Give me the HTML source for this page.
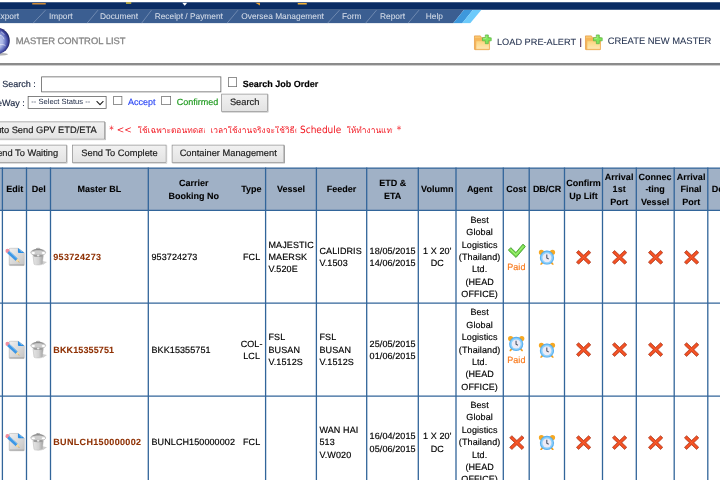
<!DOCTYPE html>
<html lang="en"><head><meta charset="utf-8"><title>Master Control List</title>
<style>
html,body{margin:0;padding:0;background:#fff;overflow:hidden;}
body{width:720px;height:480px;position:relative;font-family:"Liberation Sans",sans-serif;}
#w{position:absolute;left:0;top:0;width:960px;height:640px;transform:scale(.75);transform-origin:0 0;overflow:hidden;background:#fff;font-size:12px;color:#000;-webkit-text-stroke:.22px;text-rendering:geometricPrecision;}
.a{position:absolute;white-space:nowrap;line-height:1;}
.btn{position:absolute;box-sizing:border-box;border:1.2px solid #8f8f8f;background:linear-gradient(#f1f1f1,#e3e3e3);color:#1a1a1a;font-size:12.4px;text-align:center;white-space:nowrap;box-shadow:.8px .8px 0 #9a9a9a;}
.cb{position:absolute;box-sizing:border-box;border:1.3px solid #6e6e6e;background:#fff;}
table{position:absolute;border-collapse:collapse;table-layout:fixed;font-size:12px;}
td,th{border:2px solid transparent;padding:0;overflow:hidden;box-sizing:border-box;line-height:16.6px;}
th{font-weight:bold;text-align:center;-webkit-text-stroke:.12px;}
td{letter-spacing:.13px;}
.ct{display:flex;align-items:center;}
.ct span{display:block;text-align:center;}
.l{text-align:left;padding-left:3px;}
.c{text-align:center;}
.r{text-align:right;padding-right:3px;}
.m{color:#8f3104;font-weight:bold;-webkit-text-stroke:.1px;}
.paid{color:#f97a1c;display:block;line-height:8.87px;padding-top:7.8px;}
svg{display:block;margin:0 auto;}
.th{display:inline-block;overflow:hidden;white-space:nowrap;vertical-align:bottom;}
</style></head>
<body><div id="w">
<svg width="0" height="0" style="position:absolute"><defs><linearGradient id="gd" x1="0" y1="0" x2="1" y2="1"><stop offset="0" stop-color="#f0f0f0"/><stop offset="1" stop-color="#c4c4c4"/></linearGradient><linearGradient id="gb" x1="0" y1="0" x2="1" y2="0"><stop offset="0" stop-color="#e4e4e4"/><stop offset=".55" stop-color="#d2d2d2"/><stop offset="1" stop-color="#a2a2a2"/></linearGradient><linearGradient id="gf" x1="0" y1="0" x2="0" y2="1"><stop offset="0" stop-color="#fcd47c"/><stop offset="1" stop-color="#fee8b6"/></linearGradient><radialGradient id="gr" cx=".5" cy=".5" r=".5"><stop offset="0" stop-color="#64b8f4"/><stop offset=".75" stop-color="#8fd2fb"/><stop offset="1" stop-color="#3f9ee9"/></radialGradient><radialGradient id="gg" cx=".44" cy=".52" r=".57"><stop offset="0" stop-color="#d3dcf6"/><stop offset=".5" stop-color="#aab6e6"/><stop offset=".7" stop-color="#6b78c4"/><stop offset=".86" stop-color="#3a419a"/><stop offset="1" stop-color="#141850"/></radialGradient><filter id="b3" x="-20%" y="-20%" width="140%" height="140%"><feGaussianBlur stdDeviation=".35"/></filter><filter id="b5" x="-20%" y="-20%" width="140%" height="140%"><feGaussianBlur stdDeviation=".55"/></filter></defs></svg>
<div class="a" style="left:0;top:3.2px;width:960px;height:9.73px;background:#0a2c64"></div>
<svg class="a" style="left:0;top:12.8px" width="653.33" height="18.4" viewBox="0 9.6 490 13.8" preserveAspectRatio="none"><polygon points="0,9.6 464,9.6 453,23.4 0,23.4" fill="#3b5e91"/><polygon points="464,9.6 473,9.6 462,23.4 453,23.4" fill="#3d98dc"/><polygon points="473,9.6 481.5,9.6 470,23.4 462,23.4" fill="#6ccafb"/>
<line x1="33" y1="23.2" x2="45.5" y2="10" stroke="#8197ba" stroke-width=".75"/>
<line x1="87" y1="23.2" x2="98" y2="10" stroke="#8197ba" stroke-width=".75"/>
<line x1="141.5" y1="23.2" x2="151.5" y2="10" stroke="#8197ba" stroke-width=".75"/>
<line x1="227" y1="23.2" x2="238" y2="10" stroke="#8197ba" stroke-width=".75"/>
<line x1="327.5" y1="23.2" x2="339.5" y2="10" stroke="#8197ba" stroke-width=".75"/>
<line x1="365.5" y1="23.2" x2="376.5" y2="10" stroke="#8197ba" stroke-width=".75"/>
<line x1="408" y1="23.2" x2="419" y2="10" stroke="#8197ba" stroke-width=".75"/>
</svg>
<div class="a" style="left:42.67px;top:3.6px;width:18.67px;height:2.4px;background:#cf8a34"></div>
<div class="a" style="left:168px;top:3.33px;width:6.67px;height:1.47px;background:#dcc23e"></div>
<div class="a" style="left:397.07px;top:3.6px;width:11.87px;height:2.8px;background:#f6b233"></div>
<svg class="a" style="left:240px;top:2.67px" width="109.33" height="5.33" viewBox="180 2 82 4"><path d="M182.200 2.500h5l-2.500 2.900z" fill="#fff"/><path d="M255.300 2.600h4.700v2.600z" fill="#f3a52e"/></svg>
<div class="a" style="left:-6.8px;top:17.24px;font-size:11.13px;color:#d3dbe8;-webkit-text-stroke:.1px;">Export</div>
<div class="a" style="left:65.2px;top:17.24px;font-size:11.13px;color:#d3dbe8;-webkit-text-stroke:.1px;">Import</div>
<div class="a" style="left:133.33px;top:17.24px;font-size:11.13px;color:#d3dbe8;-webkit-text-stroke:.1px;">Document</div>
<div class="a" style="left:206.27px;top:17.24px;font-size:11.13px;color:#d3dbe8;-webkit-text-stroke:.1px;">Receipt / Payment</div>
<div class="a" style="left:321.73px;top:17.24px;font-size:11.13px;color:#d3dbe8;-webkit-text-stroke:.1px;">Oversea Management</div>
<div class="a" style="left:456px;top:17.24px;font-size:11.13px;color:#d3dbe8;-webkit-text-stroke:.1px;">Form</div>
<div class="a" style="left:506.67px;top:17.24px;font-size:11.13px;color:#d3dbe8;-webkit-text-stroke:.1px;">Report</div>
<div class="a" style="left:567.73px;top:17.24px;font-size:11.13px;color:#d3dbe8;-webkit-text-stroke:.1px;">Help</div>
<svg class="a" style="left:0;top:34.67px" width="18.67" height="42.67" viewBox="0 26 14 32"><ellipse cx="-2" cy="54" rx="10" ry="1.500" fill="#777" opacity=".55" filter="url(#b5)"/><circle cx="-3.400" cy="40.600" r="13.200" fill="url(#gg)"/><path d="M0 35c2 .5 3.500 2 4 4M0 44.500c2-.5 4-.3 5.500 1M1 31.500c1.500.8 2.500 1.800 3.200 3" fill="none" stroke="#fff" stroke-width=".8" opacity=".7" filter="url(#b3)"/></svg>
<div class="a" style="left:21.07px;top:49.12px;font-size:12.53px;color:#848484;-webkit-text-stroke:.4px;">MASTER CONTROL LIST</div>
<div class="a" style="left:662.67px;top:49.62px;font-size:12.27px;color:#24324f;-webkit-text-stroke:.08px;">LOAD PRE-ALERT</div>
<div class="a" style="left:772.53px;top:49.67px;font-size:12.2px;color:#3a1040;">|</div>
<div class="a" style="left:810.4px;top:49.39px;font-size:12.53px;color:#24324f;-webkit-text-stroke:.08px;">CREATE NEW MASTER</div>
<svg class="a" style="left:631.07px;top:45.2px" width="24.8" height="22.32" viewBox="0 0 20 18"><g filter="url(#b3)"><path d="M1.300 2.300h6.400l1.100 1.900h8.700v12.300a.6 .6 0 0 1-.6 .6H1.900a.6 .6 0 0 1-.6-.6z" fill="#f6b65a" stroke="#e79c44" stroke-width=".8"/><path d="M1.900 3h5.300l.9 1.700H1.900z" fill="#f9c772"/><path d="M3 7.600h14.300v9H3z" fill="url(#gf)" stroke="#f2b45e" stroke-width=".5"/><path d="M13 1.300h3.200v3.100h3.100v3.200h-3.100v3.100H13V7.600H9.900V4.400H13z" fill="#7fe65a" stroke="#5db347" stroke-width=".8" stroke-linejoin="round"/><path d="M13.800 2.200v2.900h-3" fill="none" stroke="#b5f59a" stroke-width=".7"/></g></svg>
<svg class="a" style="left:779.33px;top:45.2px" width="24.8" height="22.32" viewBox="0 0 20 18"><g filter="url(#b3)"><path d="M1.300 2.300h6.400l1.100 1.900h8.700v12.300a.6 .6 0 0 1-.6 .6H1.900a.6 .6 0 0 1-.6-.6z" fill="#f6b65a" stroke="#e79c44" stroke-width=".8"/><path d="M1.900 3h5.300l.9 1.700H1.900z" fill="#f9c772"/><path d="M3 7.600h14.300v9H3z" fill="url(#gf)" stroke="#f2b45e" stroke-width=".5"/><path d="M13 1.300h3.200v3.100h3.100v3.200h-3.100v3.100H13V7.600H9.900V4.400H13z" fill="#7fe65a" stroke="#5db347" stroke-width=".8" stroke-linejoin="round"/><path d="M13.800 2.200v2.900h-3" fill="none" stroke="#b5f59a" stroke-width=".7"/></g></svg>
<div class="a" style="left:0;top:84px;width:960px;height:4px;background:linear-gradient(#8a8a8a 0,#8c8c8c 62%,#c4c4c4 76%,#e6e6e6 100%)"></div>
<div class="a" style="left:3.07px;top:105.84px;font-size:12px;color:#1b2742;">Search :</div>
<div class="a" style="left:54.93px;top:101.6px;width:240.27px;height:21.87px;box-sizing:border-box;border:1.3px solid #5a5a5a;background:#fff"></div>
<div class="cb" style="left:303.6px;top:103.33px;width:12px;height:12.27px"></div>
<div class="a" style="left:323.73px;top:105.58px;font-size:12px;color:#000;font-weight:bold;">Search Job Order</div>
<div class="a" style="left:-23.33px;top:130.64px;font-size:12px;color:#1b2742;">GateWay :</div>
<div class="a" style="left:36.93px;top:128.4px;width:105.33px;height:16.27px;box-sizing:border-box;border:1.3px solid #5a5a5a;background:#fff"></div>
<div class="a" style="left:41.73px;top:131.84px;font-size:10.11px;color:#1b2742;-webkit-text-stroke:0;">-- Select Status --</div>
<svg class="a" style="left:128.4px;top:134.13px" width="10.67" height="6.67" viewBox="0 0 8 5"><path d="M.6 .6L4 4.2L7.4 .6" fill="none" stroke="#222" stroke-width="1.1"/></svg>
<div class="cb" style="left:150.93px;top:127.6px;width:12.27px;height:12.27px"></div>
<div class="a" style="left:170.67px;top:130.38px;font-size:12px;color:#2b47f5;">Accept</div>
<div class="cb" style="left:215.47px;top:127.6px;width:12.27px;height:12.27px"></div>
<div class="a" style="left:235.6px;top:130.38px;font-size:12px;color:#1f9a1f;">Confirmed</div>
<div class="btn" style="left:295.47px;top:124.67px;width:61.47px;height:24px;line-height:21.87px">Search</div>
<div class="btn" style="left:-24.93px;top:161.73px;width:165.33px;height:23.87px;line-height:21.73px">Auto Send GPV ETD/ETA</div>
<div class="btn" style="left:-23.47px;top:192.93px;width:112.4px;height:24px;line-height:21.87px">Send To Waiting</div>
<div class="btn" style="left:96.27px;top:192.93px;width:126px;height:24px;line-height:21.87px">Send To Complete</div>
<div class="btn" style="left:229.2px;top:192.93px;width:150.13px;height:24px;line-height:21.87px">Container Management</div>
<div class="a" style="left:145.73px;top:166.58px;font-size:13.33px;color:#f2141e;font-family:'DejaVu Sans Condensed','DejaVu Sans','Liberation Sans',sans-serif;-webkit-text-stroke:0;">* &lt;&lt;</div>
<div class="a" style="left:183.73px;top:168.39px;font-size:11.2px;color:#f2141e;font-family:'DejaVu Sans Condensed','DejaVu Sans','Liberation Sans',sans-serif;width:89.33px;overflow:hidden;-webkit-text-stroke:0;">ใช้เฉพาะตอนทดสอบ</div>
<div class="a" style="left:280.53px;top:168.39px;font-size:11.2px;color:#f2141e;font-family:'DejaVu Sans Condensed','DejaVu Sans','Liberation Sans',sans-serif;width:114px;overflow:hidden;-webkit-text-stroke:0;">เวลาใช้งานจริงจะใช้วิธีตั้ง</div>
<div class="a" style="left:400px;top:166.58px;font-size:13.33px;color:#f2141e;font-family:'DejaVu Sans Condensed','DejaVu Sans','Liberation Sans',sans-serif;-webkit-text-stroke:0;">Schedule</div>
<div class="a" style="left:462.27px;top:168.39px;font-size:11.2px;color:#f2141e;font-family:'DejaVu Sans Condensed','DejaVu Sans','Liberation Sans',sans-serif;width:60.67px;overflow:hidden;-webkit-text-stroke:0;">ให้ทำงานแทน</div>
<div class="a" style="left:528.93px;top:166.58px;font-size:13.33px;color:#f2141e;font-family:'DejaVu Sans Condensed','DejaVu Sans','Liberation Sans',sans-serif;-webkit-text-stroke:0;">*</div>
<div class="a" style="left:0;top:224px;width:960px;height:57px;background:#a0b1c6"></div>
<table style="left:-41px;top:223px;width:1042px">
<colgroup>
<col style="width:43px">
<col style="width:32px">
<col style="width:32px">
<col style="width:131px">
<col style="width:120px">
<col style="width:36px">
<col style="width:68px">
<col style="width:67px">
<col style="width:69px">
<col style="width:50px">
<col style="width:63px">
<col style="width:35px">
<col style="width:47px">
<col style="width:50px">
<col style="width:45px">
<col style="width:51px">
<col style="width:45px">
<col style="width:56px">
</colgroup>
<tr class="h" style="height:57px">
<th></th>
<th style="padding-left:1.400px">Edit</th>
<th style="padding-left:1.400px">Del</th>
<th>Master BL</th>
<th colspan="2"><div class="ct"><span style="width:120px">Carrier<br>Booking No</span><span style="width:36px">Type</span></div></th>
<th>Vessel</th>
<th>Feeder</th>
<th>ETD &amp;<br>ETA</th>
<th>Volumn</th>
<th>Agent</th>
<th>Cost</th>
<th>DB/CR</th>
<th>Confirm<br>Up Lift</th>
<th>Arrival<br>1st<br>Port</th>
<th>Connec<br>-ting<br>Vessel</th>
<th>Arrival<br>Final<br>Port</th>
<th style="text-align:left;padding-left:4px">De</th>
</tr>
<tr style="height:123.5px">
<td></td><td class="c"><svg width="26.67" height="25.33" viewBox="0 0 20 19" style="position:relative;left:1px"><g filter="url(#b3)"><path d="M5.200 .6H12.700L19.200 5.400V17a1.200 1.200 0 0 1-1.200 1.200H5.200A1.200 1.200 0 0 1 4 17V1.800A1.200 1.200 0 0 1 5.200 .6z" fill="url(#gd)" stroke="#b4b4b4" stroke-width=".6"/><path d="M4.300 17.300h14.600" stroke="#a6a6a6" stroke-width=".9"/><path d="M12.700 .6L19.200 5.400H13.600a.9 .9 0 0 1-.9-.9z" fill="#2c8ee4"/><path d="M14.200 2.400l2.600 2" stroke="#8cc8f6" stroke-width=".8"/><circle cx="2.200" cy="3.400" r="2.100" fill="#f08ea0"/><path d="M3 4.500L11.600 12.300" stroke="#3e97e5" stroke-width="3.100"/><path d="M3.800 3.700L12.300 11.400" stroke="#7cc0f4" stroke-width=".9"/><path d="M12.700 10.800L14.500 14.900L10.300 13.500z" fill="#f4d9a2"/><path d="M13.500 13.800l1 1.100-1.500-.4z" fill="#b98a3a"/></g></svg></td><td class="c"><svg width="24" height="25.33" viewBox="0 0 18 19" style="position:relative;left:1.100px"><g filter="url(#b5)"><path d="M10.500 13l6.500 1.500-4.200 3z" fill="#cfcfcf"/><path d="M3 8h10.300l-1 8.600c-.2 1.100-8.100 1.100-8.300 0z" fill="url(#gb)" stroke="#b3b3b3" stroke-width=".5"/><ellipse cx="8.200" cy="5" rx="7.400" ry="3.300" fill="#cdcdcd" stroke="#adadad" stroke-width=".7"/><path d="M2 3.800c2-3.400 10.400-3.400 12.400 0c-3-1.300-9.400-1.300-12.400 0z" fill="#8a8a8a"/><path d="M6 1.600c.8-1.300 3.600-1.300 4.400 0" fill="none" stroke="#9a9a9a" stroke-width=".9"/><ellipse cx="8.200" cy="8.300" rx="4.800" ry="1.200" fill="#9d9d9d"/><ellipse cx="8.200" cy="8" rx="1.300" ry="1" fill="#e8e8e8"/><ellipse cx="3.200" cy="5.600" rx="1.800" ry="1" fill="#fff"/><ellipse cx="13.400" cy="5.600" rx="1.800" ry="1" fill="#fff"/></g></svg></td>
<td class="l m" style="letter-spacing:0.45px">953724273</td>
<td class="l" style="border-right:none">953724273</td>
<td class="c" style="border-left:none">FCL</td>
<td class="l">MAJESTIC<br>MAERSK<br>V.520E</td><td class="l">CALIDRIS<br>V.1503</td>
<td class="c">18/05/2015<br>14/06/2015</td><td class="c">1 X 20'<br>DC</td><td class="c">Best<br>Global<br>Logistics<br>(Thailand)<br>Ltd.<br>(HEAD<br>OFFICE)</td>
<td class="c"><svg width="24" height="18.67" viewBox="0 0 18 14" ><g><path d="M3 3.900L.6 6.400L8.300 13.700L17.700 2.700L15.200 .4L8.200 8.800z" fill="#7de24c" stroke="#459a35" stroke-width=".9" stroke-linejoin="round"/><path d="M2.800 5.800L8.200 11L15.400 2.500" fill="none" stroke="#a9f08a" stroke-width=".9"/></g></svg><span class="paid">Paid</span></td><td class="c"><svg width="22.67" height="21.33" viewBox="0 0 17 16" ><g filter="url(#b3)"><circle cx="2.900" cy="3.300" r="2.600" fill="#f6a822"/><circle cx="14" cy="3.300" r="2.600" fill="#f6a822"/><path d="M3.800 13.800L2.600 15.300M13.100 13.800L14.300 15.300" stroke="#f3a01e" stroke-width="1.800" stroke-linecap="round"/><circle cx="8.450" cy="8.700" r="7.100" fill="url(#gr)"/><circle cx="8.450" cy="8.700" r="4.500" fill="#ecebf6"/><path d="M8.300 5.600V9l1.900 1" stroke="#4a5568" stroke-width="1.100" fill="none"/></g></svg></td>
<td class="c"><svg width="21.33" height="20" viewBox="0 0 16 15" ><g transform="translate(.35 .1)"><g stroke="#b5533c" stroke-width=".9" fill="#f04a1c"><rect x="-.4" y="6" width="16.800" height="3" transform="rotate(43.500 8 7.500)"/><rect x="-.4" y="6" width="16.800" height="3" transform="rotate(-43.500 8 7.500)"/><rect x=".1" y="6.450" width="15.800" height="2.100" transform="rotate(43.500 8 7.500)" stroke="none"/><rect x=".1" y="6.450" width="15.800" height="2.100" transform="rotate(-43.500 8 7.500)" stroke="none"/></g><path d="M3 2.700L13 12.300M13 2.700L3 12.300" stroke="#f86a3e" stroke-width=".8" opacity=".8"/></g></svg></td>
<td class="c"><svg width="21.33" height="20" viewBox="0 0 16 15" ><g transform="translate(.35 .1)"><g stroke="#b5533c" stroke-width=".9" fill="#f04a1c"><rect x="-.4" y="6" width="16.800" height="3" transform="rotate(43.500 8 7.500)"/><rect x="-.4" y="6" width="16.800" height="3" transform="rotate(-43.500 8 7.500)"/><rect x=".1" y="6.450" width="15.800" height="2.100" transform="rotate(43.500 8 7.500)" stroke="none"/><rect x=".1" y="6.450" width="15.800" height="2.100" transform="rotate(-43.500 8 7.500)" stroke="none"/></g><path d="M3 2.700L13 12.300M13 2.700L3 12.300" stroke="#f86a3e" stroke-width=".8" opacity=".8"/></g></svg></td>
<td class="c"><svg width="21.33" height="20" viewBox="0 0 16 15" ><g transform="translate(.35 .1)"><g stroke="#b5533c" stroke-width=".9" fill="#f04a1c"><rect x="-.4" y="6" width="16.800" height="3" transform="rotate(43.500 8 7.500)"/><rect x="-.4" y="6" width="16.800" height="3" transform="rotate(-43.500 8 7.500)"/><rect x=".1" y="6.450" width="15.800" height="2.100" transform="rotate(43.500 8 7.500)" stroke="none"/><rect x=".1" y="6.450" width="15.800" height="2.100" transform="rotate(-43.500 8 7.500)" stroke="none"/></g><path d="M3 2.700L13 12.300M13 2.700L3 12.300" stroke="#f86a3e" stroke-width=".8" opacity=".8"/></g></svg></td>
<td class="c"><svg width="21.33" height="20" viewBox="0 0 16 15" ><g transform="translate(.35 .1)"><g stroke="#b5533c" stroke-width=".9" fill="#f04a1c"><rect x="-.4" y="6" width="16.800" height="3" transform="rotate(43.500 8 7.500)"/><rect x="-.4" y="6" width="16.800" height="3" transform="rotate(-43.500 8 7.500)"/><rect x=".1" y="6.450" width="15.800" height="2.100" transform="rotate(43.500 8 7.500)" stroke="none"/><rect x=".1" y="6.450" width="15.800" height="2.100" transform="rotate(-43.500 8 7.500)" stroke="none"/></g><path d="M3 2.700L13 12.300M13 2.700L3 12.300" stroke="#f86a3e" stroke-width=".8" opacity=".8"/></g></svg></td>
<td></td></tr>
<tr style="height:123.5px">
<td></td><td class="c"><svg width="26.67" height="25.33" viewBox="0 0 20 19" style="position:relative;left:1px"><g filter="url(#b3)"><path d="M5.200 .6H12.700L19.200 5.400V17a1.200 1.200 0 0 1-1.200 1.200H5.200A1.200 1.200 0 0 1 4 17V1.800A1.200 1.200 0 0 1 5.200 .6z" fill="url(#gd)" stroke="#b4b4b4" stroke-width=".6"/><path d="M4.300 17.300h14.600" stroke="#a6a6a6" stroke-width=".9"/><path d="M12.700 .6L19.200 5.400H13.600a.9 .9 0 0 1-.9-.9z" fill="#2c8ee4"/><path d="M14.200 2.400l2.600 2" stroke="#8cc8f6" stroke-width=".8"/><circle cx="2.200" cy="3.400" r="2.100" fill="#f08ea0"/><path d="M3 4.500L11.600 12.300" stroke="#3e97e5" stroke-width="3.100"/><path d="M3.800 3.700L12.300 11.400" stroke="#7cc0f4" stroke-width=".9"/><path d="M12.700 10.800L14.500 14.900L10.300 13.500z" fill="#f4d9a2"/><path d="M13.500 13.800l1 1.100-1.500-.4z" fill="#b98a3a"/></g></svg></td><td class="c"><svg width="24" height="25.33" viewBox="0 0 18 19" style="position:relative;left:1.100px"><g filter="url(#b5)"><path d="M10.500 13l6.500 1.500-4.200 3z" fill="#cfcfcf"/><path d="M3 8h10.300l-1 8.600c-.2 1.100-8.100 1.100-8.300 0z" fill="url(#gb)" stroke="#b3b3b3" stroke-width=".5"/><ellipse cx="8.200" cy="5" rx="7.400" ry="3.300" fill="#cdcdcd" stroke="#adadad" stroke-width=".7"/><path d="M2 3.800c2-3.400 10.400-3.400 12.400 0c-3-1.300-9.400-1.300-12.400 0z" fill="#8a8a8a"/><path d="M6 1.600c.8-1.300 3.600-1.300 4.400 0" fill="none" stroke="#9a9a9a" stroke-width=".9"/><ellipse cx="8.200" cy="8.300" rx="4.800" ry="1.200" fill="#9d9d9d"/><ellipse cx="8.200" cy="8" rx="1.300" ry="1" fill="#e8e8e8"/><ellipse cx="3.200" cy="5.600" rx="1.800" ry="1" fill="#fff"/><ellipse cx="13.400" cy="5.600" rx="1.800" ry="1" fill="#fff"/></g></svg></td>
<td class="l m" style="letter-spacing:0.17px">BKK15355751</td>
<td class="l" style="border-right:none">BKK15355751</td>
<td class="c" style="border-left:none">COL-<br>LCL</td>
<td class="l">FSL<br>BUSAN<br>V.1512S</td><td class="l">FSL<br>BUSAN<br>V.1512S</td>
<td class="c">25/05/2015<br>01/06/2015</td><td class="c"></td><td class="c">Best<br>Global<br>Logistics<br>(Thailand)<br>Ltd.<br>(HEAD<br>OFFICE)</td>
<td class="c"><svg width="22.67" height="21.33" viewBox="0 0 17 16" ><g filter="url(#b3)"><circle cx="2.900" cy="3.300" r="2.600" fill="#f6a822"/><circle cx="14" cy="3.300" r="2.600" fill="#f6a822"/><path d="M3.800 13.800L2.600 15.300M13.100 13.800L14.300 15.300" stroke="#f3a01e" stroke-width="1.800" stroke-linecap="round"/><circle cx="8.450" cy="8.700" r="7.100" fill="url(#gr)"/><circle cx="8.450" cy="8.700" r="4.500" fill="#ecebf6"/><path d="M8.300 5.600V9l1.900 1" stroke="#4a5568" stroke-width="1.100" fill="none"/></g></svg><span class="paid">Paid</span></td><td class="c"><svg width="22.67" height="21.33" viewBox="0 0 17 16" ><g filter="url(#b3)"><circle cx="2.900" cy="3.300" r="2.600" fill="#f6a822"/><circle cx="14" cy="3.300" r="2.600" fill="#f6a822"/><path d="M3.800 13.800L2.600 15.300M13.100 13.800L14.300 15.300" stroke="#f3a01e" stroke-width="1.800" stroke-linecap="round"/><circle cx="8.450" cy="8.700" r="7.100" fill="url(#gr)"/><circle cx="8.450" cy="8.700" r="4.500" fill="#ecebf6"/><path d="M8.300 5.600V9l1.900 1" stroke="#4a5568" stroke-width="1.100" fill="none"/></g></svg></td>
<td class="c"><svg width="21.33" height="20" viewBox="0 0 16 15" ><g transform="translate(.35 .1)"><g stroke="#b5533c" stroke-width=".9" fill="#f04a1c"><rect x="-.4" y="6" width="16.800" height="3" transform="rotate(43.500 8 7.500)"/><rect x="-.4" y="6" width="16.800" height="3" transform="rotate(-43.500 8 7.500)"/><rect x=".1" y="6.450" width="15.800" height="2.100" transform="rotate(43.500 8 7.500)" stroke="none"/><rect x=".1" y="6.450" width="15.800" height="2.100" transform="rotate(-43.500 8 7.500)" stroke="none"/></g><path d="M3 2.700L13 12.300M13 2.700L3 12.300" stroke="#f86a3e" stroke-width=".8" opacity=".8"/></g></svg></td>
<td class="c"><svg width="21.33" height="20" viewBox="0 0 16 15" ><g transform="translate(.35 .1)"><g stroke="#b5533c" stroke-width=".9" fill="#f04a1c"><rect x="-.4" y="6" width="16.800" height="3" transform="rotate(43.500 8 7.500)"/><rect x="-.4" y="6" width="16.800" height="3" transform="rotate(-43.500 8 7.500)"/><rect x=".1" y="6.450" width="15.800" height="2.100" transform="rotate(43.500 8 7.500)" stroke="none"/><rect x=".1" y="6.450" width="15.800" height="2.100" transform="rotate(-43.500 8 7.500)" stroke="none"/></g><path d="M3 2.700L13 12.300M13 2.700L3 12.300" stroke="#f86a3e" stroke-width=".8" opacity=".8"/></g></svg></td>
<td class="c"><svg width="21.33" height="20" viewBox="0 0 16 15" ><g transform="translate(.35 .1)"><g stroke="#b5533c" stroke-width=".9" fill="#f04a1c"><rect x="-.4" y="6" width="16.800" height="3" transform="rotate(43.500 8 7.500)"/><rect x="-.4" y="6" width="16.800" height="3" transform="rotate(-43.500 8 7.500)"/><rect x=".1" y="6.450" width="15.800" height="2.100" transform="rotate(43.500 8 7.500)" stroke="none"/><rect x=".1" y="6.450" width="15.800" height="2.100" transform="rotate(-43.500 8 7.500)" stroke="none"/></g><path d="M3 2.700L13 12.300M13 2.700L3 12.300" stroke="#f86a3e" stroke-width=".8" opacity=".8"/></g></svg></td>
<td class="c"><svg width="21.33" height="20" viewBox="0 0 16 15" ><g transform="translate(.35 .1)"><g stroke="#b5533c" stroke-width=".9" fill="#f04a1c"><rect x="-.4" y="6" width="16.800" height="3" transform="rotate(43.500 8 7.500)"/><rect x="-.4" y="6" width="16.800" height="3" transform="rotate(-43.500 8 7.500)"/><rect x=".1" y="6.450" width="15.800" height="2.100" transform="rotate(43.500 8 7.500)" stroke="none"/><rect x=".1" y="6.450" width="15.800" height="2.100" transform="rotate(-43.500 8 7.500)" stroke="none"/></g><path d="M3 2.700L13 12.300M13 2.700L3 12.300" stroke="#f86a3e" stroke-width=".8" opacity=".8"/></g></svg></td>
<td></td></tr>
<tr style="height:123.5px">
<td></td><td class="c"><svg width="26.67" height="25.33" viewBox="0 0 20 19" style="position:relative;left:1px"><g filter="url(#b3)"><path d="M5.200 .6H12.700L19.200 5.400V17a1.200 1.200 0 0 1-1.200 1.200H5.200A1.200 1.200 0 0 1 4 17V1.800A1.200 1.200 0 0 1 5.200 .6z" fill="url(#gd)" stroke="#b4b4b4" stroke-width=".6"/><path d="M4.300 17.300h14.600" stroke="#a6a6a6" stroke-width=".9"/><path d="M12.700 .6L19.200 5.400H13.600a.9 .9 0 0 1-.9-.9z" fill="#2c8ee4"/><path d="M14.200 2.400l2.600 2" stroke="#8cc8f6" stroke-width=".8"/><circle cx="2.200" cy="3.400" r="2.100" fill="#f08ea0"/><path d="M3 4.500L11.600 12.300" stroke="#3e97e5" stroke-width="3.100"/><path d="M3.800 3.700L12.300 11.400" stroke="#7cc0f4" stroke-width=".9"/><path d="M12.700 10.800L14.500 14.900L10.300 13.500z" fill="#f4d9a2"/><path d="M13.500 13.800l1 1.100-1.500-.4z" fill="#b98a3a"/></g></svg></td><td class="c"><svg width="24" height="25.33" viewBox="0 0 18 19" style="position:relative;left:1.100px"><g filter="url(#b5)"><path d="M10.500 13l6.500 1.500-4.200 3z" fill="#cfcfcf"/><path d="M3 8h10.300l-1 8.600c-.2 1.100-8.100 1.100-8.300 0z" fill="url(#gb)" stroke="#b3b3b3" stroke-width=".5"/><ellipse cx="8.200" cy="5" rx="7.400" ry="3.300" fill="#cdcdcd" stroke="#adadad" stroke-width=".7"/><path d="M2 3.800c2-3.400 10.400-3.400 12.400 0c-3-1.300-9.400-1.300-12.400 0z" fill="#8a8a8a"/><path d="M6 1.600c.8-1.300 3.600-1.300 4.400 0" fill="none" stroke="#9a9a9a" stroke-width=".9"/><ellipse cx="8.200" cy="8.300" rx="4.800" ry="1.200" fill="#9d9d9d"/><ellipse cx="8.200" cy="8" rx="1.300" ry="1" fill="#e8e8e8"/><ellipse cx="3.200" cy="5.600" rx="1.800" ry="1" fill="#fff"/><ellipse cx="13.400" cy="5.600" rx="1.800" ry="1" fill="#fff"/></g></svg></td>
<td class="l m" style="letter-spacing:0.45px">BUNLCH150000002</td>
<td class="l" style="border-right:none">BUNLCH150000002</td>
<td class="c" style="border-left:none">FCL</td>
<td class="l"></td><td class="l">WAN HAI<br>513<br>V.W020</td>
<td class="c">16/04/2015<br>05/06/2015</td><td class="c">1 X 20'<br>DC</td><td class="c">Best<br>Global<br>Logistics<br>(Thailand)<br>Ltd.<br>(HEAD<br>OFFICE)</td>
<td class="c"><svg width="21.33" height="20" viewBox="0 0 16 15" ><g transform="translate(.35 .1)"><g stroke="#b5533c" stroke-width=".9" fill="#f04a1c"><rect x="-.4" y="6" width="16.800" height="3" transform="rotate(43.500 8 7.500)"/><rect x="-.4" y="6" width="16.800" height="3" transform="rotate(-43.500 8 7.500)"/><rect x=".1" y="6.450" width="15.800" height="2.100" transform="rotate(43.500 8 7.500)" stroke="none"/><rect x=".1" y="6.450" width="15.800" height="2.100" transform="rotate(-43.500 8 7.500)" stroke="none"/></g><path d="M3 2.700L13 12.300M13 2.700L3 12.300" stroke="#f86a3e" stroke-width=".8" opacity=".8"/></g></svg></td><td class="c"><svg width="22.67" height="21.33" viewBox="0 0 17 16" ><g filter="url(#b3)"><circle cx="2.900" cy="3.300" r="2.600" fill="#f6a822"/><circle cx="14" cy="3.300" r="2.600" fill="#f6a822"/><path d="M3.800 13.800L2.600 15.300M13.100 13.800L14.300 15.300" stroke="#f3a01e" stroke-width="1.800" stroke-linecap="round"/><circle cx="8.450" cy="8.700" r="7.100" fill="url(#gr)"/><circle cx="8.450" cy="8.700" r="4.500" fill="#ecebf6"/><path d="M8.300 5.600V9l1.900 1" stroke="#4a5568" stroke-width="1.100" fill="none"/></g></svg></td>
<td class="c"><svg width="21.33" height="20" viewBox="0 0 16 15" ><g transform="translate(.35 .1)"><g stroke="#b5533c" stroke-width=".9" fill="#f04a1c"><rect x="-.4" y="6" width="16.800" height="3" transform="rotate(43.500 8 7.500)"/><rect x="-.4" y="6" width="16.800" height="3" transform="rotate(-43.500 8 7.500)"/><rect x=".1" y="6.450" width="15.800" height="2.100" transform="rotate(43.500 8 7.500)" stroke="none"/><rect x=".1" y="6.450" width="15.800" height="2.100" transform="rotate(-43.500 8 7.500)" stroke="none"/></g><path d="M3 2.700L13 12.300M13 2.700L3 12.300" stroke="#f86a3e" stroke-width=".8" opacity=".8"/></g></svg></td>
<td class="c"><svg width="21.33" height="20" viewBox="0 0 16 15" ><g transform="translate(.35 .1)"><g stroke="#b5533c" stroke-width=".9" fill="#f04a1c"><rect x="-.4" y="6" width="16.800" height="3" transform="rotate(43.500 8 7.500)"/><rect x="-.4" y="6" width="16.800" height="3" transform="rotate(-43.500 8 7.500)"/><rect x=".1" y="6.450" width="15.800" height="2.100" transform="rotate(43.500 8 7.500)" stroke="none"/><rect x=".1" y="6.450" width="15.800" height="2.100" transform="rotate(-43.500 8 7.500)" stroke="none"/></g><path d="M3 2.700L13 12.300M13 2.700L3 12.300" stroke="#f86a3e" stroke-width=".8" opacity=".8"/></g></svg></td>
<td class="c"><svg width="21.33" height="20" viewBox="0 0 16 15" ><g transform="translate(.35 .1)"><g stroke="#b5533c" stroke-width=".9" fill="#f04a1c"><rect x="-.4" y="6" width="16.800" height="3" transform="rotate(43.500 8 7.500)"/><rect x="-.4" y="6" width="16.800" height="3" transform="rotate(-43.500 8 7.500)"/><rect x=".1" y="6.450" width="15.800" height="2.100" transform="rotate(43.500 8 7.500)" stroke="none"/><rect x=".1" y="6.450" width="15.800" height="2.100" transform="rotate(-43.500 8 7.500)" stroke="none"/></g><path d="M3 2.700L13 12.300M13 2.700L3 12.300" stroke="#f86a3e" stroke-width=".8" opacity=".8"/></g></svg></td>
<td class="c"><svg width="21.33" height="20" viewBox="0 0 16 15" ><g transform="translate(.35 .1)"><g stroke="#b5533c" stroke-width=".9" fill="#f04a1c"><rect x="-.4" y="6" width="16.800" height="3" transform="rotate(43.500 8 7.500)"/><rect x="-.4" y="6" width="16.800" height="3" transform="rotate(-43.500 8 7.500)"/><rect x=".1" y="6.450" width="15.800" height="2.100" transform="rotate(43.500 8 7.500)" stroke="none"/><rect x=".1" y="6.450" width="15.800" height="2.100" transform="rotate(-43.500 8 7.500)" stroke="none"/></g><path d="M3 2.700L13 12.300M13 2.700L3 12.300" stroke="#f86a3e" stroke-width=".8" opacity=".8"/></g></svg></td>
<td></td></tr>
</table>
<svg class="a" style="left:0;top:0" width="960" height="640" viewBox="0 0 720 480"><g stroke="#32659a" stroke-width="1.300"><path d="M2.4 167.45V480"/><path d="M26.5 167.45V480"/><path d="M50.5 167.45V480"/><path d="M148.3 167.45V480"/><path d="M265.6 167.45V480"/><path d="M316.4 167.45V480"/><path d="M366.7 167.45V480"/><path d="M418.3 167.45V480"/><path d="M456 167.45V480"/><path d="M503.3 167.45V480"/><path d="M529.2 167.45V480"/><path d="M564.5 167.45V480"/><path d="M602.5 167.45V480"/><path d="M636.3 167.45V480"/><path d="M674.2 167.45V480"/><path d="M707.8 167.45V480"/><path d="M0 168.1H720"/><path d="M0 210.45H720"/><path d="M0 303.1H720"/><path d="M0 396.1H720"/></g></svg>
</div></body></html>
